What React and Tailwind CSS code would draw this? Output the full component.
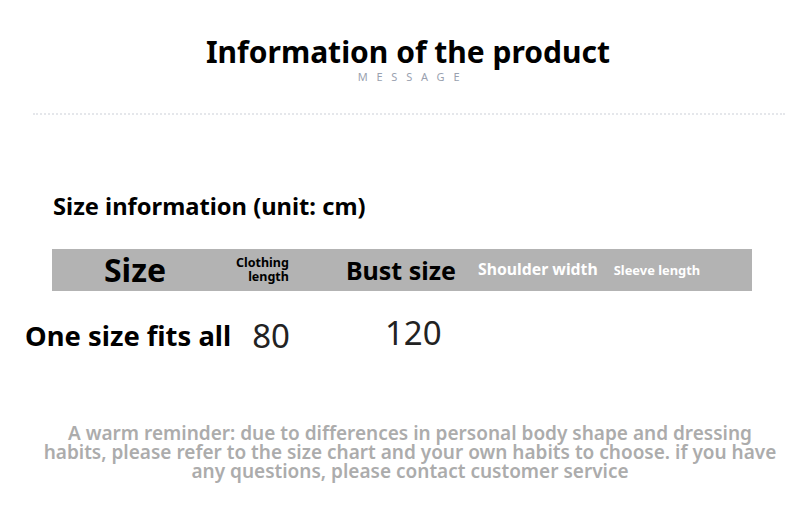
import React from 'react';

export default function App() {
    return (
        <div className="w-[790px] h-[522px] bg-white overflow-hidden" style={{ fontFamily: '"Noto Sans", "Open Sans", sans-serif' }}>
            {/* header */}
            <div className="pt-[36px] pl-[26px] text-center">
                <h1 className="text-[30px] font-bold leading-[32px] text-black">Information of the product</h1>
                <p className="mt-[3px] pl-[10px] text-[11px] leading-[12px] tracking-[0.8em] text-gray-400">MESSAGE</p>
            </div>
            <div className="mt-[30px] ml-[33px] mr-[5px] border-t-2 border-dotted border-gray-200"></div>

            {/* size info */}
            <h2 className="mt-[76px] pl-[53px] text-[23.7px] font-bold leading-[30px] text-black">Size information (unit: cm)</h2>

            <div className="mt-[28px] ml-[52px] w-[700px] h-[42px] bg-[#b3b3b3] flex items-center">
                <div className="w-[166px] text-center text-[32px] font-bold text-black leading-none">Size</div>
                <div className="ml-[18px] text-right text-[12.5px] font-bold leading-[14px] text-black">
                    Clothing<br />length
                </div>
                <div className="ml-[57px] text-[25px] font-bold text-black leading-none">Bust size</div>
                <div className="ml-[22px] text-[15.8px] font-bold text-white leading-none">Shoulder width</div>
                <div className="ml-[16px] text-[12.9px] font-bold text-white leading-none">Sleeve length</div>
            </div>

            <div className="mt-[28px] flex items-center h-[34px]">
                <span className="pl-[25px] text-[27.4px] font-bold text-black leading-none">One size fits all</span>
                <span className="ml-[21px] -mt-[1px] text-[33px] text-[#222] leading-none">80</span>
                <span className="ml-[95px] -mt-[7px] text-[33px] text-[#222] leading-none">120</span>
            </div>

            {/* reminder */}
            <p className="mt-[71px] pl-[38px] pr-[8px] text-center text-[19px] font-semibold leading-[19px] text-[#acacac]">
                A warm reminder: due to differences in personal body shape and dressing habits, please refer to the size chart and your own habits to choose. if you have any questions, please contact customer service
            </p>
        </div>
    );
}
